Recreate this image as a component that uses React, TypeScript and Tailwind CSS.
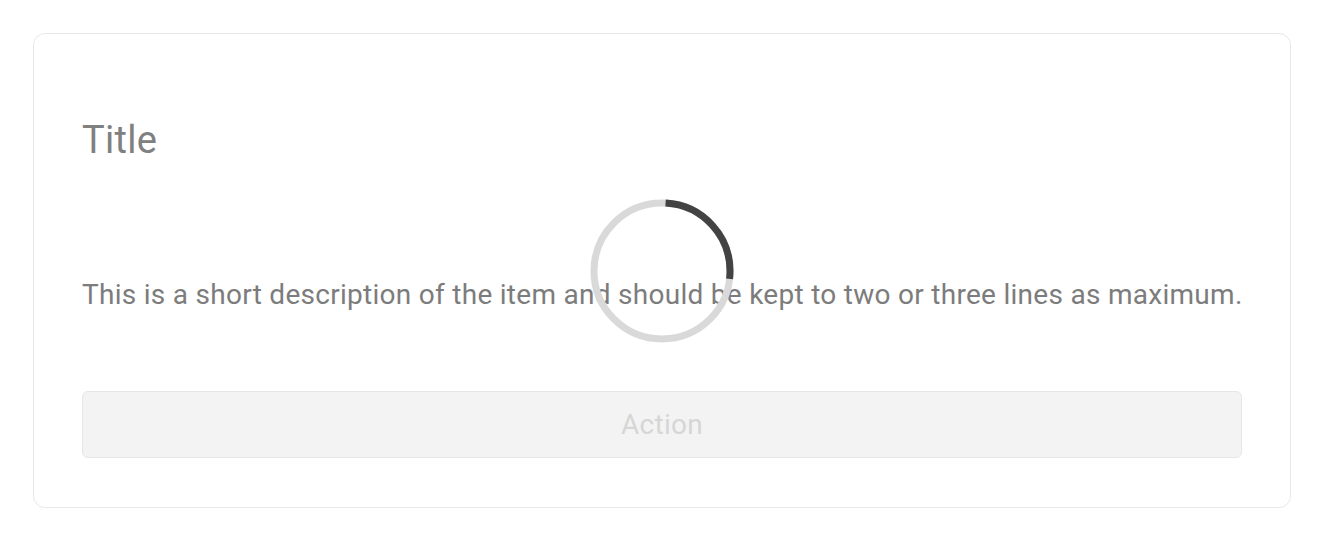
const Spinner = () => {
  // gray ring with a dark arc from ~12 to ~3 o'clock
  const r = 68;
  const c = 2 * Math.PI * r;
  return (
    <svg width="146" height="146" viewBox="0 0 146 146" className="block">
      <circle cx="73" cy="73" r={r} fill="none" stroke="#d9d9d9" strokeWidth="7" />
      <circle
        cx="73"
        cy="73"
        r={r}
        fill="none"
        stroke="#434343"
        strokeWidth="7"
        strokeDasharray={`${c * 0.26} ${c}`}
        transform="rotate(-87 73 73)"
      />
    </svg>
  );
};

export default function App() {
  return (
    <div className="bg-white p-[33px] font-['Roboto',sans-serif]">
      <div className="relative rounded-xl border border-[#e8e8e8] bg-white px-12 pt-12 pb-[49px]">
        <h2 className="mt-[35px] text-[38px] leading-[46px] font-normal tracking-[0.3px] text-[#808080]">Title</h2>
        <p className="mt-[112px] whitespace-nowrap text-[28px] leading-[40px] tracking-[0.28px] text-[#7c7c7c]">
          This is a short description of the item and should be kept to two or three lines as maximum.
        </p>
        <button
          disabled
          className="mt-[76px] flex h-[67px] w-full items-center justify-center rounded-md border border-[#e6e6e6] bg-[#f3f3f3] text-[28px] tracking-[0.3px] text-[#d6d6d6]"
        >
          Action
        </button>
        <div className="absolute inset-0 flex items-center justify-center">
          <Spinner />
        </div>
      </div>
    </div>
  );
}
